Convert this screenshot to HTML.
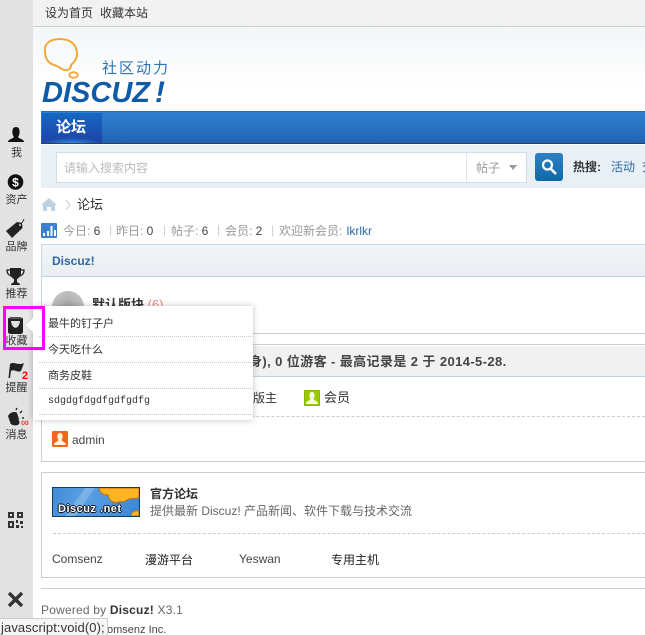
<!DOCTYPE html>
<html><head><meta charset="utf-8">
<style>
html,body{margin:0;padding:0;background:#fff}
#p{position:relative;width:645px;height:635px;overflow:hidden;background:#fff;font-family:"Liberation Sans","WenQuanYi Zen Hei","Noto Sans CJK SC",sans-serif;font-size:12px;color:#333}
#p div,#p span.a,#p svg{position:absolute}
.t{position:absolute;white-space:nowrap;line-height:16px}
.l{position:absolute;height:2px;left:41px;right:0;background:#ccc}
.d{position:absolute;height:0;border-top:1px dashed #ccc}
.g{color:#999}
.s{color:#333;font-size:11px;width:33px;text-align:center;left:0;white-space:nowrap;line-height:14px}
.m{position:absolute;left:17px;width:214px;height:0;border-top:1px dotted #ccc}
</style></head><body>
<div id="p">
<!-- top -->
<div style="left:33px;top:0;right:0;height:26px;background:#f2f2f2;border-bottom:1px solid #ccc"></div>
<div class="t" style="left:45px;top:5px">设为首页</div>
<div class="t" style="left:100px;top:5px">收藏本站</div>
<div style="left:33px;top:27px;right:0;height:60px;background:linear-gradient(#f3f6f8,#fff)"></div>
<!-- logo -->
<svg style="left:40px;top:36px" width="135" height="70" viewBox="0 0 135 70">
<path d="M5 15C4 7 11 3 20 3C30 3 37 8 37 18C37 24 33 27 31 29C31 33 27 36 22 33C20 32 18 30 14 29C8 27 5 22 5 15Z" fill="none" stroke="#f2a83c" stroke-width="2"/>
<ellipse cx="33.500" cy="39" rx="4.200" ry="2.800" fill="none" stroke="#f2a83c" stroke-width="1.800"/>
<text x="2" y="66" font-family="Liberation Sans" font-weight="bold" font-style="italic" font-size="29" fill="#0f5ba8" textLength="108" lengthAdjust="spacingAndGlyphs">DISCUZ</text>
<text x="115" y="66" font-family="Liberation Sans" font-weight="bold" font-style="italic" font-size="30" fill="#0f5ba8">!</text>
</svg>
<div class="t" style="left:102px;top:61px;font-size:15px;color:#2f73b8;letter-spacing:2px">社区动力</div>
<!-- nav -->
<div style="left:41px;top:111px;right:0;height:33px;background:linear-gradient(#2f80d2,#2263b0);border-top:1px solid #2a6cb8;border-bottom:1px solid #333f55;box-sizing:border-box"></div>
<div style="left:42px;top:113px;width:60px;height:30px;background:radial-gradient(ellipse 30px 5px at 50% 100%,#2b8fe0,transparent),linear-gradient(#1468c4,#1f43a6)"></div>
<div class="t" style="left:56px;top:120px;font-size:15px;font-weight:bold;color:#fff">论坛</div>
<!-- search -->
<div style="left:41px;top:145px;right:0;height:43px;background:#e8eff5"></div>
<div style="left:56px;top:152px;width:469px;height:29px;background:#fff;border:1px solid #d0dee8"></div>
<div style="left:466px;top:153px;width:1px;height:29px;background:#dde6ee"></div>
<div class="t" style="left:64px;top:160px;color:#bbb">请输入搜索内容</div>
<div class="t" style="left:476px;top:160px;color:#999">帖子</div>
<div style="left:509px;top:165px;width:0;height:0;border:4px solid transparent;border-top:5px solid #999"></div>
<div style="left:535px;top:153px;width:28px;height:28px;border-radius:3px;background:linear-gradient(#2e82c4,#0e69a9)"></div>
<svg style="left:535px;top:153px" width="28" height="28" viewBox="0 0 28 28"><circle cx="12.500" cy="12" r="4.500" fill="none" stroke="#fff" stroke-width="2.200"/><path d="M16 16l5 5" stroke="#fff" stroke-width="2.600"/></svg>
<div class="t" style="left:573px;top:159px;font-weight:bold">热搜:</div>
<div class="t" style="left:611px;top:159px;color:#2b6aa5">活动</div>
<div class="t" style="left:642px;top:159px;color:#2b6aa5">交</div>
<!-- breadcrumb -->
<svg style="left:41px;top:198px" width="45" height="14" viewBox="0 0 45 14"><path d="M0 7L8 0l8 7h-2v6h-4V9H6v4H2V7z" fill="#bcd2e2"/><path d="M25 2l4 5-4 5" fill="none" stroke="#c4c4c4"/></svg>
<div class="t" style="left:77px;top:197px;color:#333;font-size:13px">论坛</div>
<!-- stats -->
<svg style="left:41px;top:223px" width="16" height="15" viewBox="0 0 16 15"><rect width="16" height="15" rx="1" fill="#3d80cc"/><path d="M2 13h2v-3H2zM6 13h2V8H6zM9.500 13h2V3h-2zM13 13h2V7h-2z" fill="#fff"/></svg>
<div class="t g" style="left:63px;top:223px">今日: <span style="color:#444">6</span></div>
<div class="t" style="left:109px;top:222px;color:#d8c8d8">|</div>
<div class="t g" style="left:116px;top:223px">昨日: <span style="color:#444">0</span></div>
<div class="t" style="left:163px;top:222px;color:#d8c8d8">|</div>
<div class="t g" style="left:171px;top:223px">帖子: <span style="color:#444">6</span></div>
<div class="t" style="left:217px;top:222px;color:#d8c8d8">|</div>
<div class="t g" style="left:225px;top:223px">会员: <span style="color:#444">2</span></div>
<div class="t" style="left:271px;top:222px;color:#d8c8d8">|</div>
<div class="t g" style="left:279px;top:223px">欢迎新会员: <span style="color:#2b6aa5;margin-left:1px">lkrlkr</span></div>
<!-- box 1 -->
<div style="left:41px;top:244px;right:-2px;height:90px;border:1px solid #c5d8e8;border-bottom:1px solid #ccc;border-right:0;box-sizing:border-box"></div>
<div style="left:42px;top:245px;right:0;height:31px;background:linear-gradient(#f3f6f8,#e8eef3);border-bottom:1px solid #c2d5e3"></div>
<div class="t" style="left:52px;top:253px;font-weight:bold;color:#336699">Discuz!</div>
<div style="left:52px;top:291px;width:32px;height:32px;border-radius:50%;background:radial-gradient(circle at 50% 45%,#a9a9a9,#cfcfcf)"></div>
<div class="t" style="left:92px;top:297px;font-weight:bold;font-size:13px">默认版块 <span style="color:#e88;font-weight:normal">(6)</span></div>
<!-- online -->
<div class="l" style="top:344px;height:1px"></div>
<div style="left:41px;top:346px;right:0;height:31px;background:#f1f1f1;border-bottom:1px solid #c2d5e3;border-left:1px solid #ccc;box-sizing:border-box"></div>
<div class="t" style="left:249px;top:354px;font-weight:bold;letter-spacing:.4px;color:#444;font-size:13px">身), 0 位游客 - 最高记录是 2 于 2014-5-28.</div>
<div class="t" style="left:253px;top:390px">版主</div>
<div style="left:304px;top:390px;width:16px;height:16px;background:#9c0;border:1px solid #8ab800;box-sizing:border-box"></div>
<svg style="left:304px;top:390px" width="16" height="16" viewBox="0 0 16 16"><path d="M2 14c0-3 3.500-3 4.500-5C5 7 4.500 2 8 2s3 5 1.500 7c1 2 4.500 2 4.500 5z" fill="#f6f9e0"/></svg>
<div class="t" style="left:324px;top:390px;font-size:13px">会员</div>
<div class="d" style="left:41px;right:0;top:416px"></div>
<svg style="left:52px;top:431px" width="16" height="16" viewBox="0 0 16 16"><rect width="16" height="16" rx="1.500" fill="#f2651a"/><path d="M2 14c0-3 3.500-3 4.500-5C5 7 4.500 2 8 2s3 5 1.500 7c1 2 4.500 2 4.500 5z" fill="#fff3e0"/></svg>
<div class="t" style="left:72px;top:432px;color:#444">admin</div>
<div style="left:41px;top:416px;width:1px;height:46px;background:#ccc"></div>
<div class="l" style="top:461px;height:1px"></div>
<!-- box 3 -->
<div class="l" style="top:472px;height:1px"></div>
<div style="left:41px;top:472px;width:1px;height:105px;background:#ccc"></div>
<div style="left:52px;top:487px;width:86px;height:28px;border:1px solid #163c5c;background:linear-gradient(115deg,#3f8ada,#5a9fe2 35%,#3a86d6)"></div>
<svg style="left:53px;top:488px" width="86" height="28" viewBox="0 0 86 28"><path d="M12 28L32 0h10L22 28z" fill="#fff" opacity=".2"/><path d="M46 0c1 5 4 7 9 7 1 5 5 9 11 7 3-1 4 1 8-2 3-2 7-1 12-2V0z" fill="#ffb522" stroke="#c96a10"/><path d="M78 28c0-4 4-6 8-5v5z" fill="#ffb522" stroke="#c96a10"/></svg>
<div class="t" style="left:58px;top:503px;font-size:11px;font-weight:bold;color:#fff;letter-spacing:.5px;line-height:12px;text-shadow:1px 0 #111,-1px 0 #111,0 1px #111,0 -1px #111">Discuz .net</div>
<div class="t" style="left:150px;top:486px;font-weight:bold">官方论坛</div>
<div class="t" style="left:150px;top:503px;color:#666">提供最新 Discuz! 产品新闻、软件下载与技术交流</div>
<div class="d" style="left:53px;right:0;top:533px"></div>
<div class="t" style="left:52px;top:551px;color:#444">Comsenz</div>
<div class="t" style="left:145px;top:552px;color:#222">漫游平台</div>
<div class="t" style="left:239px;top:551px;color:#444">Yeswan</div>
<div class="t" style="left:331px;top:552px;color:#222">专用主机</div>
<div class="l" style="top:577px;height:1px"></div>
<div class="l" style="top:588px;height:1px"></div>
<!-- footer -->
<div class="t" style="left:41px;top:602px;color:#666;letter-spacing:.2px">Powered by <b style="color:#333">Discuz!</b> X3.1</div>
<div class="t" style="left:107px;top:622px;font-size:11px;color:#444">omsenz Inc.</div>
<!-- sidebar -->
<div style="left:0;top:0;width:33px;height:620px;background:#e2e2e2"></div>
<div style="left:0;top:307px;width:33px;height:36px;background:#e8e8e8"></div>
<svg style="left:0;top:120px" width="33" height="310" viewBox="0 0 33 310">
<path d="M8 22c0-3 5-3 6-5-2-2-3-10 2-10s4 8 2 10c1 2 6 2 6 5z" fill="#111"/>
<circle cx="15.500" cy="62" r="7.800" fill="#111"/><text x="15.500" y="66.500" text-anchor="middle" font-family="Liberation Sans" font-size="12" font-weight="bold" fill="#fff">$</text>
<path d="M6 111L17 102 22 103 22.500 108 12 118z" fill="#222"/><circle cx="20" cy="105" r="1" fill="#e2e2e2"/><path d="M20 104c2-1 3-2 4-5" stroke="#333" fill="none"/>
<path d="M10 148h11v5c0 3-2 5-4 6v3l3 2v1h-9v-1l3-2v-3c-2-1-4-3-4-6z" fill="#222"/><path d="M10 150H7c0 4 2 5 4 6M21 150h3c0 4-2 5-4 6" fill="none" stroke="#222" stroke-width="1.300"/>
<path d="M8 198h15v14c0 1-1 2-3 2H11c-2 0-3-1-3-2z" fill="#222"/><path d="M10 197h11l2 2H8z" fill="#555"/><path d="M11 201c1 9 8 9 9 0z" fill="#e2e2e2"/>
<path d="M10 244c4-3 8 2 14-1l-3 8c-4 2-6-2-10 0l-1 7h-1.500z" fill="#222"/>
<path d="M8 296c2-4 7-5 9-3l2 6c-2 4-7 5-9 3z" fill="#222"/><path d="M18 299c2 3 2 4 0 6-3 1-7 0-8-2" fill="#222"/><path d="M16 290l1-2M20 293l2-2M22 298h2" stroke="#333" stroke-width="1.500"/>
</svg>
<div class="s" style="top:146px">我</div>
<div class="s" style="top:193px">资产</div>
<div class="s" style="top:240px">品牌</div>
<div class="s" style="top:287px">推荐</div>
<div class="s" style="top:334px">收藏</div>
<div class="s" style="top:381px">提醒</div>
<div class="s" style="top:428px">消息</div>
<div class="t" style="left:22px;top:370px;color:#f00;font-size:11px;font-weight:bold;line-height:12px">2</div>
<div class="t" style="left:21px;top:417px;color:#f00;font-size:11px;line-height:12px">∞</div>
<svg style="left:7px;top:511px" width="17" height="18" viewBox="0 0 17 18"><path d="M1 1h6v6H1zM3 3v2h2V3zM10 1h6v6h-6zM12 3v2h2V3zM1 10h6v7H1zM3 12v3h2v-3zM9 9h2v3H9zM13 10h3v3h-3zM9 14h3v3H9zM14 15h2v2h-2z" fill="#333" fill-rule="evenodd"/></svg>
<svg style="left:7px;top:591px" width="17" height="17" viewBox="0 0 17 17"><path d="M2 2l13 13M15 2L2 15" stroke="#333" stroke-width="3.400"/></svg>
<!-- tooltip -->
<div class="t" style="left:0;top:618px;width:108px;height:17px;background:#f6f6f6;border:1px solid #ccc;border-left:0;border-bottom:0;box-sizing:border-box;color:#333;font-size:13px;padding-left:1px;font-family:'Liberation Sans',sans-serif;line-height:17px;letter-spacing:.1px">javascript:void(0);</div>
<!-- popup -->
<div style="left:33px;top:306px;width:220px;height:114px;background:#fff;box-shadow:0 0 6px rgba(0,0,0,.25)">
<div class="t" style="left:15px;top:10px;font-size:11px;letter-spacing:0">最牛的钉子户</div>
<div class="m" style="left:6px;top:30px"></div>
<div class="t" style="left:15px;top:36px;font-size:11px">今天吃什么</div>
<div class="m" style="left:6px;top:56px"></div>
<div class="t" style="left:15px;top:62px;font-size:11px">商务皮鞋</div>
<div class="m" style="left:6px;top:82px"></div>
<div class="t" style="left:15px;top:88px;font-size:10px;font-family:'Liberation Mono',monospace">sdgdgfdgdfgdfgdfg</div>
<div class="m" style="left:6px;top:108px"></div>
</div>
<div style="left:26px;top:318px;width:0;height:0;border:7px solid transparent;border-left:0;border-right:7px solid #fff"></div>
<!-- highlight -->
<div style="left:3px;top:306px;width:42px;height:44px;border:3px solid #f0f;box-sizing:border-box"></div>
</div>
</body></html>
